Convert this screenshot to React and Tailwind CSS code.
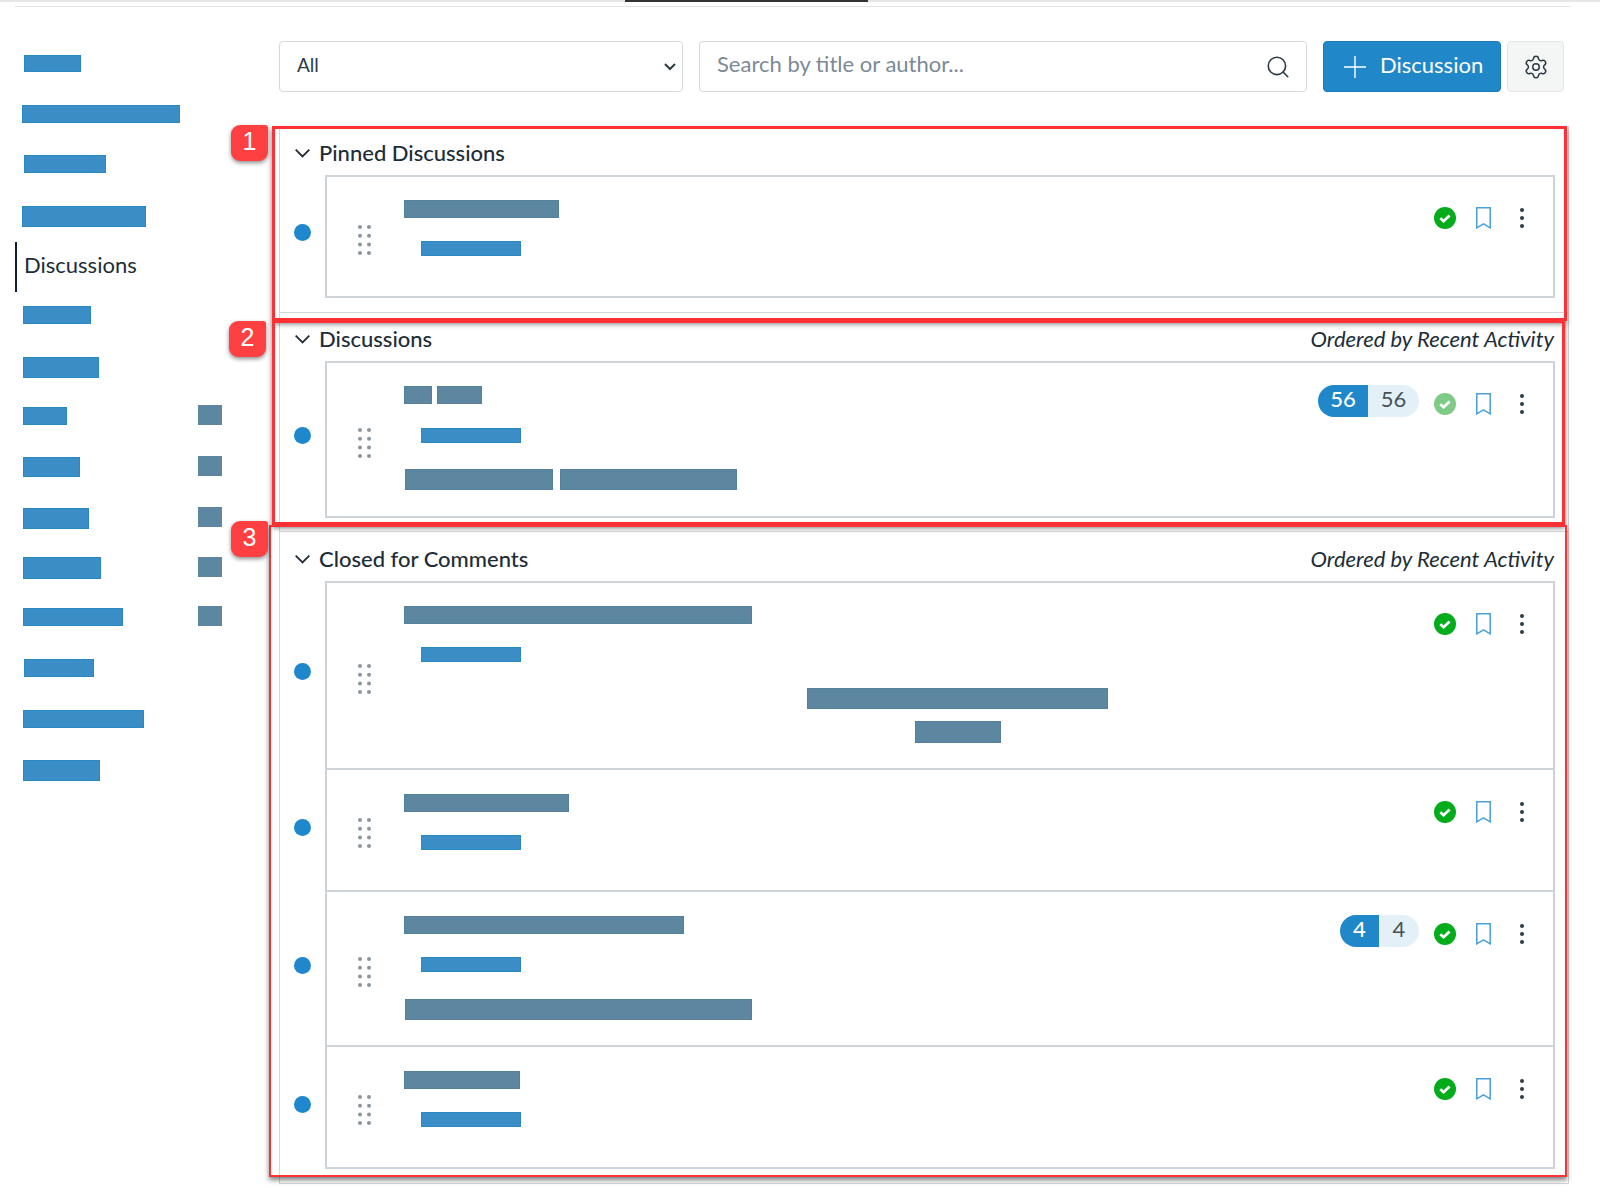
import React from "react";
import { Search, Settings } from "lucide-react";

const navBars = [
  { wrap: "mt-[48px] ml-[24px]", bar: "w-[57px] h-[17px]" },
  { wrap: "mt-[33px] ml-[22px]", bar: "w-[158px] h-[18px]" },
  { wrap: "mt-[32px] ml-[24px]", bar: "w-[82px] h-[18px]" },
  { wrap: "mt-[33px] ml-[22px]", bar: "w-[124px] h-[21px]" },
  { active: true },
  { wrap: "mt-[14px] ml-[23px]", bar: "w-[68px] h-[18px]" },
  { wrap: "mt-[33px] ml-[23px]", bar: "w-[76px] h-[21px]" },
  { wrap: "mt-[27px] ml-[23px]", bar: "w-[44px] h-[18px]", hidden: true },
  { wrap: "mt-[29px] ml-[23px]", bar: "w-[57px] h-[20px]", hidden: true },
  { wrap: "mt-[29px] ml-[23px]", bar: "w-[66px] h-[21px]", hidden: true },
  { wrap: "mt-[28px] ml-[23px]", bar: "w-[78px] h-[22px]", hidden: true },
  { wrap: "mt-[27px] ml-[23px]", bar: "w-[100px] h-[18px]", hidden: true },
  { wrap: "mt-[31px] ml-[24px]", bar: "w-[70px] h-[18px]" },
  { wrap: "mt-[33px] ml-[23px]", bar: "w-[121px] h-[18px]" },
  { wrap: "mt-[32px] ml-[23px]", bar: "w-[77px] h-[21px]" },
];

function LinkBar({ className }) {
  return <div className={"bg-[#3a8ec5] border border-[#2a88c4] " + className} />;
}

function Redacted({ className }) {
  return <div className={"bg-[#5d87a1] border border-[#55809c] " + className} />;
}

function Sidebar() {
  return (
    <div className="w-[279px] shrink-0">
      {navBars.map((item, i) =>
        item.active ? (
          <div key={i} className="mt-[15px] ml-[15px] h-[50px] border-l-2 border-[#0f1c3a] pl-[7px] pb-[6px] flex items-center text-[22px] text-[#202d38]">
            Discussions
          </div>
        ) : (
          <div key={i} className={"flex items-center w-[199px] " + (item.hidden ? "h-[22px] " : "") + item.wrap}>
            <LinkBar className={item.bar} />
            {item.hidden && <Redacted className="ml-auto mb-[3px] w-[24px] h-[20px] border-none" />}
          </div>
        )
      )}
    </div>
  );
}

function Caret({ className }) {
  return (
    <svg className={className} width="15" height="9" viewBox="0 0 15 9" fill="none" stroke="currentColor" strokeWidth="1.8">
      <path d="M0.7 0.7l6.8 6.8 6.8-6.8" />
    </svg>
  );
}

function Toolbar() {
  return (
    <div className="mt-[34px] h-[51px] flex">
      <div className="w-[404px] rounded-[4px] border border-[#d5d9dc] flex items-center pl-[17px] pr-[6px] pb-[2px] text-[19px] text-[#2d3b45]">
        <span>All</span>
        <svg className="ml-auto mt-[2px]" width="12" height="8" viewBox="0 0 12 8" fill="none" stroke="currentColor" strokeWidth="2">
          <path d="M1 1l5 5 5-5" />
        </svg>
      </div>
      <div className="ml-[16px] w-[608px] rounded-[4px] border border-[#d5d9dc] flex items-center pl-[17px] pr-[15px] text-[22px] text-[#7b8a94]">
        <span className="mb-[6px]">Search by title or author...</span>
        <Search className="ml-auto w-[26px] h-[26px] text-[#2d3b45]" strokeWidth={1.5} />
      </div>
      <button className="ml-[16px] w-[178px] rounded-[4px] bg-[#2088c9] border border-[#1c7ab6] flex items-center pl-[20px] text-[22px] text-white">
        <svg width="22" height="22" viewBox="0 0 22 22" stroke="currentColor" strokeWidth="1.4">
          <path d="M11 0v22M0 11h22" />
        </svg>
        <span className="ml-[14px] mb-[4px]">Discussion</span>
      </button>
      <button className="ml-[6px] w-[57px] rounded-[4px] bg-[#f4f5f5] border border-[#e2e4e6] flex items-center justify-center text-[#2d3b45]">
        <Settings className="w-[26px] h-[26px]" strokeWidth={1.4} />
      </button>
    </div>
  );
}

function DragHandle() {
  return (
    <svg width="13" height="30" viewBox="0 0 13 30" fill="#8b969e">
      {[2, 10.7, 19.4, 28].map((y) => (
        <g key={y}>
          <circle cx="2" cy={y} r="2" />
          <circle cx="11" cy={y} r="2" />
        </g>
      ))}
    </svg>
  );
}

function CheckDot({ faded }) {
  return (
    <svg width="22" height="22" viewBox="0 0 22 22">
      <circle cx="11" cy="11" r="11" fill={faded ? "#7fcb86" : "#03ac1a"} />
      <path d="M6.3 11.2l3.3 3 6-5.8" fill="none" stroke="white" strokeWidth="2.8" />
    </svg>
  );
}

function BookmarkIcon() {
  return (
    <svg width="15" height="22" viewBox="0 0 15 22" fill="none" stroke="#4a9fdb" strokeWidth="1.5">
      <path d="M0.8 0.8h13.4v20l-6.7-4-6.7 4z" />
    </svg>
  );
}

function Kebab() {
  return (
    <svg width="4" height="20" viewBox="0 0 4 20" fill="#2d3b45">
      <circle cx="2" cy="2" r="2" />
      <circle cx="2" cy="10" r="2" />
      <circle cx="2" cy="18" r="2" />
    </svg>
  );
}

function Counts({ value, unread, read }) {
  return (
    <div className="flex h-[32px] mr-[15px] -mt-[8px] text-[22px] leading-[28px] rounded-full overflow-hidden">
      <div className={"bg-[#2088c9] text-white text-center font-medium " + unread}>{value}</div>
      <div className={"bg-[#e3f0f8] text-[#47525a] text-center " + read}>{value}</div>
    </div>
  );
}

function Row({ height, first, counts, unread, read, faded, children }) {
  return (
    <div className={"flex " + height}>
      <div className="w-[45px] shrink-0 pl-[14px] pb-[8px] flex items-center">
        <div className="w-[17px] h-[17px] rounded-full bg-[#1f87cb]" />
      </div>
      <div className={"flex-1 flex border-x-2 border-b-2 border-[#ccd3d9] " + (first ? "border-t-2" : "")}>
        <div className="w-[77px] shrink-0 pl-[31px] pt-[6px] flex items-center">
          <DragHandle />
        </div>
        <div className={"flex-1 " + (first ? "pt-[23px]" : "pt-[24px]")}>{children}</div>
        <div className={"flex items-start pr-[29px] " + (first ? "pt-[30px]" : "pt-[31px]")}>
          {counts && <Counts value={counts} unread={unread} read={read} />}
          <CheckDot faded={faded} />
          <div className="ml-[20px]"><BookmarkIcon /></div>
          <div className="ml-[29px] mt-[1px]"><Kebab /></div>
        </div>
      </div>
    </div>
  );
}

function Section({ title, ordered, className, children }) {
  return (
    <div className={"border-b border-[#d4d8db] pr-[13px] " + className}>
      <div className="h-[49px] pt-[4px] pl-[15px] pr-[1px] flex items-center text-[#202d38]">
        <Caret className="mt-[1px]" />
        <span className="ml-[9px] text-[22px] font-medium">{title}</span>
        {ordered && <span className="ml-auto text-[22px] italic">Ordered by Recent Activity</span>}
      </div>
      {children}
    </div>
  );
}

function SubLink({ className }) {
  return <LinkBar className={"ml-[17px] w-[100px] h-[15px] " + (className || "mt-[23px]")} />;
}

const redBoxes = [
  "left-[272px] top-[126px] w-[1295px] h-[195px] border-[3px]",
  "left-[272px] top-[320px] w-[1293px] h-[205px] border-[3px]",
  "left-[269px] top-[525px] w-[1298px] h-[652px] border-[2px]",
];

const badges = [
  { n: 1, cls: "left-[231px] top-[125px]" },
  { n: 2, cls: "left-[229px] top-[321px]" },
  { n: 3, cls: "left-[231px] top-[521px]" },
];

export default function App() {
  return (
    <div className="relative w-[1600px] h-[1203px] bg-white overflow-hidden [font-family:Lato,sans-serif]">
      <div className="h-[2px] bg-[#e4e6e8]">
        <div className="ml-[625px] w-[243px] h-[2px] bg-[#333]" />
      </div>
      <div className="mt-[4px] ml-[15px] w-[1555px] h-px bg-[#dfe1e4]" />

      <div className="flex">
        <Sidebar />
        <div className="w-[1290px]">
          <Toolbar />
          <div className="mt-[34px] border-x border-[#d4d8db]">
            <Section title="Pinned Discussions" className="pb-[14px]">
              <Row height="h-[123px]" first>
                <Redacted className="w-[155px] h-[18px]" />
                <SubLink />
              </Row>
            </Section>
            <Section title="Discussions" ordered className="-mt-px pb-[13px]">
              <Row height="h-[157px]" first counts="56" unread="w-[50px]" read="w-[51px]" faded>
                <div className="flex gap-[5px]">
                  <Redacted className="w-[28px] h-[18px]" />
                  <Redacted className="w-[45px] h-[18px]" />
                </div>
                <SubLink className="mt-[24px]" />
                <div className="flex gap-[7px] ml-[1px] mt-[26px]">
                  <Redacted className="w-[148px] h-[21px]" />
                  <Redacted className="w-[177px] h-[21px]" />
                </div>
              </Row>
            </Section>
            <Section title="Closed for Comments" ordered className="pb-[14px]">
              <Row height="h-[189px]" first>
                <Redacted className="w-[348px] h-[18px]" />
                <SubLink />
                <div className="ml-[403px] mt-[26px] w-[301px] flex flex-col items-center gap-[12px]">
                  <Redacted className="w-[301px] h-[21px]" />
                  <Redacted className="w-[86px] h-[22px]" />
                </div>
              </Row>
              <Row height="h-[122px]">
                <Redacted className="w-[165px] h-[18px]" />
                <SubLink />
              </Row>
              <Row height="h-[155px]" counts="4" unread="w-[39px]" read="w-[40px]">
                <Redacted className="w-[280px] h-[18px]" />
                <SubLink />
                <Redacted className="ml-[1px] mt-[27px] w-[347px] h-[21px]" />
              </Row>
              <Row height="h-[122px]">
                <Redacted className="w-[116px] h-[18px]" />
                <SubLink />
              </Row>
            </Section>
          </div>
        </div>
      </div>

      {redBoxes.map((cls) => (
        <div key={cls} className={"absolute border-[#ff3135] shadow-[0_3px_5px_rgba(0,0,0,0.5)] " + cls} />
      ))}
      {badges.map((b) => (
        <div
          key={b.n}
          className={"absolute w-[37px] h-[36px] pb-[3px] rounded-[9px] rounded-tr-[3px] bg-[#ff4043] shadow-[0_2px_4px_rgba(0,0,0,0.45)] flex items-center justify-center text-white text-[25px] [font-family:'Liberation_Sans',sans-serif] " + b.cls}
        >
          {b.n}
        </div>
      ))}
    </div>
  );
}
